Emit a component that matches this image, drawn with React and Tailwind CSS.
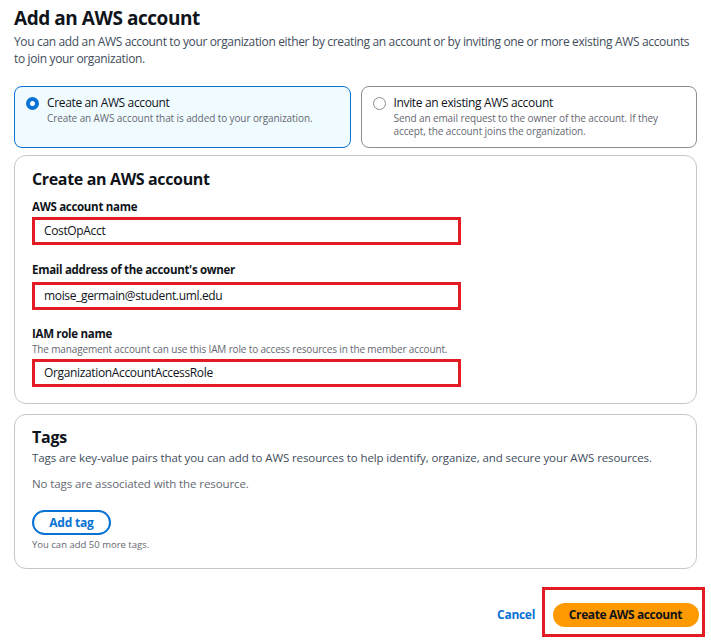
import React from 'react'

const font = { fontFamily: '"Open Sans", "Noto Sans", sans-serif' }

const Field = ({ label, hint, value, labelGap, inputGap }) => (
  <div style={{ marginTop: labelGap }}>
    <div className="text-[11.5px] font-bold text-[#0f141a] leading-[16px] tracking-[-0.3px]">{label}</div>
    {hint && (
      <div className="text-[10px] text-[#656871] leading-[14px] tracking-[-0.15px]">{hint}</div>
    )}
    <div
      className="w-[429px] h-[28px] border-[3px] border-[#e31c23] bg-white flex items-center pl-[9px]"
      style={{ marginTop: inputGap }}
    >
      <span className="text-[12px] text-[#0f141a] tracking-[-0.35px]">{value}</span>
    </div>
  </div>
)

const App = () => {
  return (
    <div className="w-[711px] h-[642px] bg-white overflow-hidden" style={font}>
      <div className="px-[14px] pt-[4px]">
        {/* Header */}
        <h1 className="text-[19px] font-bold text-[#0f141a] leading-[28px] tracking-[-0.45px]">Add an AWS account</h1>
        <p className="text-[12px] text-[#414d5c] leading-[17px] mt-[1px] tracking-[-0.35px]">
          You can add an AWS account to your organization either by creating an account or by inviting one or more existing AWS accounts to join your organization.
        </p>

        {/* Choice cards */}
        <div className="grid grid-cols-2 gap-[10px] mt-[19px]">
          <div className="h-[62px] rounded-[8px] border border-[#0972d3] bg-[#f0fbff] flex pl-[11px] pt-[8px]">
            <span className="mt-[2px] w-[13px] h-[13px] rounded-full border-[4px] border-[#0972d3] bg-white shrink-0" />
            <div className="ml-[8px]">
              <div className="text-[12px] text-[#0f141a] leading-[16px] tracking-[-0.35px]">Create an AWS account</div>
              <div className="text-[10px] text-[#656871] leading-[13px] mt-[1px] tracking-[-0.1px]">
                Create an AWS account that is added to your organization.
              </div>
            </div>
          </div>
          <div className="h-[62px] rounded-[8px] border border-[#8c8c94] bg-white flex pl-[11px] pt-[8px]">
            <span className="mt-[2px] w-[13px] h-[13px] rounded-full border-[1.5px] border-[#8c8c94] bg-white shrink-0" />
            <div className="ml-[8px] pr-[24px]">
              <div className="text-[12px] text-[#0f141a] leading-[16px] tracking-[-0.35px]">Invite an existing AWS account</div>
              <div className="text-[10px] text-[#656871] leading-[13px] mt-[1px] tracking-[-0.1px]">
                Send an email request to the owner of the account. If they accept, the account joins the organization.
              </div>
            </div>
          </div>
        </div>

        {/* Create form */}
        <div className="mt-[7px] h-[249px] rounded-[12px] border border-[#c6c6cd] pl-[17px] pt-[12px]">
          <h2 className="text-[16px] font-bold text-[#0f141a] leading-[22px] tracking-[-0.35px]">Create an AWS account</h2>
          <Field labelGap={9} inputGap={2} label="AWS account name" value="CostOpAcct" />
          <Field
            labelGap={17}
            inputGap={4}
            label="Email address of the account's owner"
            value="moise_germain@student.uml.edu"
          />
          <Field
            labelGap={16}
            inputGap={3}
            label="IAM role name"
            hint="The management account can use this IAM role to access resources in the member account."
            value="OrganizationAccountAccessRole"
          />
        </div>

        {/* Tags */}
        <div className="mt-[10px] h-[155px] rounded-[12px] border border-[#c6c6cd] pl-[17px] pt-[11px]">
          <h2 className="text-[16px] font-bold text-[#0f141a] leading-[22px] tracking-[-0.2px]">Tags</h2>
          <p className="text-[11.5px] text-[#414d5c] leading-[16px] mt-[2px] tracking-[-0.1px]">
            Tags are key-value pairs that you can add to AWS resources to help identify, organize, and secure your AWS resources.
          </p>
          <p className="text-[11.5px] text-[#656871] leading-[16px] mt-[10px] tracking-[-0.1px]">
            No tags are associated with the resource.
          </p>
          <button className="mt-[18px] h-[25px] w-[79px] rounded-full border-2 border-[#0972d3] text-[12px] font-bold text-[#0972d3] bg-white tracking-[-0.2px]">
            Add tag
          </button>
          <div className="text-[9.5px] text-[#656871] leading-[13px] mt-[3px]">You can add 50 more tags.</div>
        </div>

        {/* Actions */}
        <div className="flex justify-end items-center mt-[18px] mr-[-8px]">
          <span className="text-[12px] font-bold text-[#0972d3] mr-[7px] mt-[5px] tracking-[-0.3px]">Cancel</span>
          <div className="w-[163px] h-[50px] border-[3px] border-[#e31c23] flex items-center justify-center">
            <button className="w-[146px] h-[24px] rounded-full bg-[#ff9900] text-[12px] font-bold text-[#0f141a] mt-[5px] ml-[4px] tracking-[-0.4px]">
              Create AWS account
            </button>
          </div>
        </div>
      </div>
    </div>
  )
}

export default App
